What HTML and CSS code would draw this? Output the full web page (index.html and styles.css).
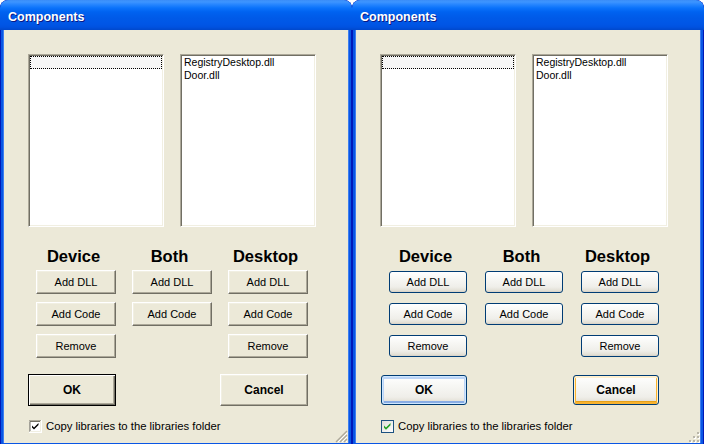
FILE: index.html
```html
<!DOCTYPE html>
<html>
<head>
<meta charset="utf-8">
<link rel="stylesheet" href="styles.css">
</head>
<body>
<div class="desk">
  <div class="win classic">
    <div class="title">Components</div>
    <div class="client">
      <div class="lists">
        <div class="listbox"><div class="focusrow"></div></div>
        <div class="listbox"><div class="item">RegistryDesktop.dll</div><div class="item">Door.dll</div></div>
      </div>
      <div class="cols">
        <div class="col"><div class="head">Device</div><div class="btn">Add DLL</div><div class="btn">Add Code</div><div class="btn">Remove</div></div>
        <div class="col"><div class="head">Both</div><div class="btn">Add DLL</div><div class="btn">Add Code</div></div>
        <div class="col"><div class="head">Desktop</div><div class="btn">Add DLL</div><div class="btn">Add Code</div><div class="btn">Remove</div></div>
      </div>
      <div class="actions">
        <div class="btn big default">OK</div>
        <div class="btn big">Cancel</div>
      </div>
      <div class="check">
        <svg class="box" width="13" height="13" viewBox="0 0 13 13">
          <rect x="0" y="0" width="13" height="13" fill="#fff"/>
          <path d="M0 12.5V0.5H12.5" stroke="#aca899" fill="none"/>
          <path d="M1 11.5V1.5H11.5" stroke="#716f64" fill="none"/>
          <path d="M12.5 0V12.5H0" stroke="#fff" fill="none"/>
          <path d="M11.5 1V11.5H1" stroke="#f1efe2" fill="none"/>
          <path d="M3 5.5l2 2 4.5-4.5v2l-4.5 4.5-2-2z" fill="#000"/>
        </svg>
        <span>Copy libraries to the libraries folder</span>
      </div>
      <svg class="grip" width="13" height="13" viewBox="0 0 13 13">
        <path d="M12 1L1 12M12 5L5 12M12 9L9 12" stroke="#aca899" stroke-width="1.4"/>
        <path d="M12 3L3 12M12 7L7 12M12 11L11 12" stroke="#fff" stroke-width="1"/>
      </svg>
    </div>
  </div>
  <div class="win xp">
    <div class="title">Components</div>
    <div class="client">
      <div class="lists">
        <div class="listbox"><div class="focusrow"></div></div>
        <div class="listbox"><div class="item">RegistryDesktop.dll</div><div class="item">Door.dll</div></div>
      </div>
      <div class="cols">
        <div class="col"><div class="head">Device</div><div class="btn">Add DLL</div><div class="btn">Add Code</div><div class="btn">Remove</div></div>
        <div class="col"><div class="head">Both</div><div class="btn">Add DLL</div><div class="btn">Add Code</div></div>
        <div class="col"><div class="head">Desktop</div><div class="btn">Add DLL</div><div class="btn">Add Code</div><div class="btn">Remove</div></div>
      </div>
      <div class="actions">
        <div class="btn big default">OK</div>
        <div class="btn big hot">Cancel</div>
      </div>
      <div class="check">
        <svg class="box" width="13" height="13" viewBox="0 0 13 13">
          <defs><linearGradient id="cg" x1="0" y1="0" x2="1" y2="1"><stop offset="0" stop-color="#dcdcd7"/><stop offset="1" stop-color="#ffffff"/></linearGradient></defs>
          <rect x="0.5" y="0.5" width="12" height="12" fill="url(#cg)" stroke="#1c5180"/>
          <path d="M3 5.5l2 2 4.5-4.5v2.2l-4.5 4.5-2-2z" fill="#21a121"/>
        </svg>
        <span>Copy libraries to the libraries folder</span>
      </div>
      <svg class="grip" width="13" height="13" viewBox="0 0 13 13">
        <g fill="#fff"><rect x="11" y="3" width="2" height="2"/><rect x="7" y="7" width="2" height="2"/><rect x="11" y="7" width="2" height="2"/><rect x="3" y="11" width="2" height="2"/><rect x="7" y="11" width="2" height="2"/><rect x="11" y="11" width="2" height="2"/></g>
        <g fill="#b9b6a9"><rect x="10" y="2" width="2" height="2"/><rect x="6" y="6" width="2" height="2"/><rect x="10" y="6" width="2" height="2"/><rect x="2" y="10" width="2" height="2"/><rect x="6" y="10" width="2" height="2"/><rect x="10" y="10" width="2" height="2"/></g>
      </svg>
    </div>
  </div>
</div>
</body>
</html>
```
FILE: styles.css
```css
html, body {
  margin: 0;
  padding: 0;
  background: #ffffff;
}
.desk {
  display: flex;
  width: 704px;
  height: 444px;
  overflow: hidden;
}
.win {
  width: 352px;
  height: 448px;
  flex: none;
  display: flex;
  flex-direction: column;
  background: #0a56e4;
  border-radius: 8px 8px 0 0;
  box-shadow: inset 1px 0 0 #0019b8, inset -1px 0 0 #0019b8;
  overflow: hidden;
}
.title {
  height: 30px;
  box-sizing: border-box;
  padding: 10px 0 0 8px;
  font-family: "Liberation Sans", Arial, sans-serif;
  font-weight: bold;
  font-size: 12.5px;
  line-height: 15px;
  color: #fff;
  text-shadow: 1px 1px 0 #0a1883;
  background: linear-gradient(to bottom, #3a8cf8 0px, #3d95ff 2px, #2a88ff 4px, #0a72fb 8px, #0062f0 12px, #005ae8 18px, #0056e6 24px, #0052e0 27px, #0048cc 30px);
  border-radius: 8px 8px 0 0;
}
.client {
  position: relative;
  flex: 1;
  margin: 0 4px 5px 4px;
  background: #ece9d8;
  box-shadow: -1px 0 0 #3c7ef0, 1px 0 0 #3c7ef0;
  font-family: "Liberation Sans", Arial, sans-serif;
  color: #000;
}
.lists {
  display: flex;
  gap: 16px;
  margin: 24px 0 0 24px;
}
.listbox {
  width: 136px;
  height: 173px;
  box-sizing: border-box;
  background: #fff;
  border: 1px solid;
  border-color: #aca899 #fff #fff #aca899;
  box-shadow: inset 1px 1px 0 #716f64, inset -1px -1px 0 #f1efe2;
  padding: 1px;
}
.focusrow {
  height: 13px;
  box-sizing: border-box;
  border: 1px dotted #000;
  background: #f6f6f6;
}
.item {
  font-size: 10.5px;
  line-height: 13px;
  padding-left: 2px;
  white-space: nowrap;
}
.cols {
  display: flex;
  gap: 16px;
  margin: 20px 0 0 32px;
  align-items: flex-start;
}
.col {
  width: 80px;
  display: flex;
  flex-direction: column;
  gap: 8px;
}
.head {
  font-weight: bold;
  font-size: 16.5px;
  line-height: 19px;
  text-align: center;
  padding-right: 5px;
  margin-bottom: -4px;
}
.btn {
  height: 24px;
  box-sizing: border-box;
  display: flex;
  align-items: center;
  justify-content: center;
  font-size: 11px;
  background: #ece9d8;
  border: 1px solid;
  border-color: #fff #716f64 #716f64 #fff;
  box-shadow: inset -1px -1px 0 #aca899, inset 1px 1px 0 #f1efe2;
}
.actions {
  display: flex;
  gap: 104px;
  margin: 16px 0 0 24px;
}
.btn.big {
  width: 88px;
  height: 32px;
  font-size: 12px;
  font-weight: bold;
}
.classic .btn.default {
  border: 1px solid #000;
  box-shadow: inset 1px 1px 0 #fff, inset -1px -1px 0 #716f64, inset -2px -2px 0 #aca899;
}
.check {
  display: flex;
  align-items: center;
  gap: 4px;
  margin: 14px 0 0 25px;
  font-size: 11.3px;
  line-height: 13px;
}
.check .box {
  flex: none;
  display: block;
}
.grip {
  position: absolute;
  right: 0;
  bottom: 0;
}
.xp .btn {
  margin: 1px;
  height: 22px;
  border: 1px solid #003c74;
  border-radius: 3px;
  background: linear-gradient(to bottom, #ffffff 0%, #f7f7f4 35%, #efeee9 75%, #e3e0d6 92%, #d6d0c5 100%);
  box-shadow: none;
}
.xp .col .btn { width: 78px; }
.xp .btn.big {
  width: 86px;
  height: 30px;
}
.xp .btn.default {
  box-shadow: inset 0 0 0 1px #cee7ff, inset 0 1px 0 2px #bcd4f6, inset 0 -1px 0 2px #89ade4;
}
.xp .btn.hot {
  box-shadow: inset 0 1px 0 1px #fff0cf, inset 0 0 0 2px #f8b330, inset 0 -1px 0 2px #e5a01a;
}
```
